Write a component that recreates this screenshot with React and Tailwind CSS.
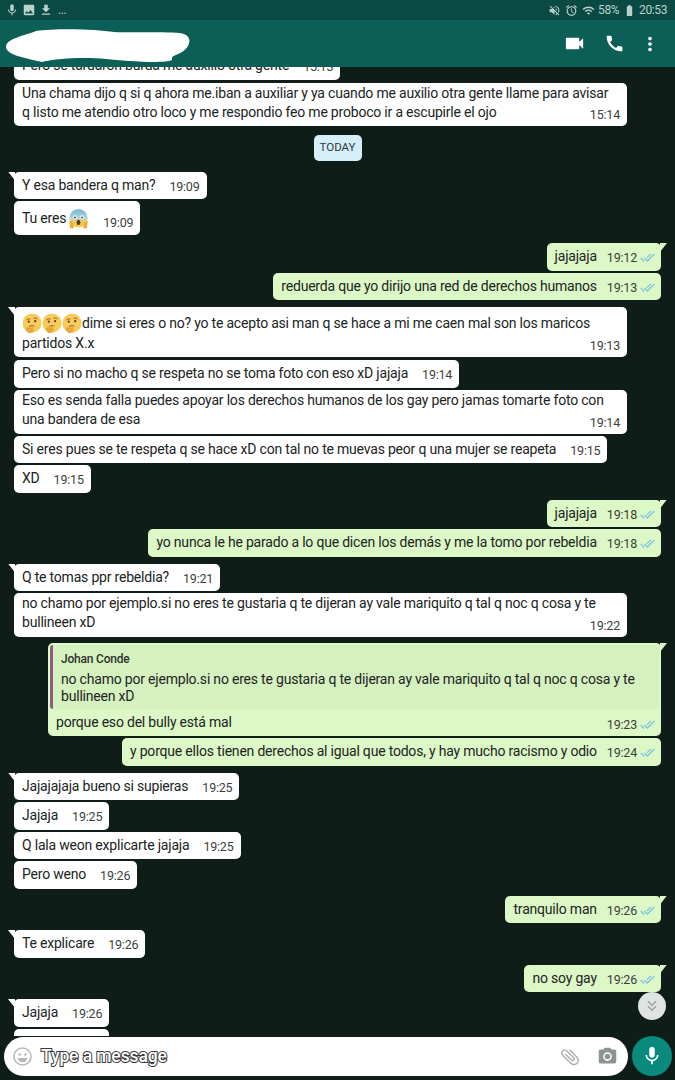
import React from 'react'
import {
  MdVideocam, MdCall, MdMoreVert, MdAttachFile, MdCameraAlt, MdMic, MdDoneAll,
  MdKeyboardDoubleArrowDown, MdVolumeOff, MdAccessAlarm, MdWifi, MdBatteryFull, MdImage, MdFileDownload,
} from 'react-icons/md'

const FearEmoji = () => (
  <svg viewBox="0 0 24 24" className="w-[21px] h-[21px] inline-block mx-[2px] align-[-5px]">
    <defs>
      <linearGradient id="fear" x1="0" y1="0" x2="0" y2="1">
        <stop offset="0" stopColor="#6bb5e8" />
        <stop offset="0.55" stopColor="#bcd8c8" />
        <stop offset="0.75" stopColor="#f7c843" />
      </linearGradient>
    </defs>
    <circle cx="12" cy="11.5" r="10.5" fill="url(#fear)" />
    <ellipse cx="8" cy="10.5" rx="2" ry="2.2" fill="#fff" />
    <ellipse cx="16" cy="10.5" rx="2" ry="2.2" fill="#fff" />
    <circle cx="8" cy="10.8" r="1" fill="#333" />
    <circle cx="16" cy="10.8" r="1" fill="#333" />
    <ellipse cx="12" cy="16.5" rx="2.2" ry="3" fill="#5b3a1e" />
    <path d="M1.5 15c2-1 3.5 1 4.500 4l1 4H2.500z" fill="#f2a93b" />
    <path d="M22.5 15c-2-1-3.500 1-4.500 4l-1 4h4.500z" fill="#f2a93b" />
  </svg>
)

const ThinkEmoji = () => (
  <svg viewBox="1 1 22 22" className="w-[20px] h-[20px] shrink-0">
    <circle cx="12" cy="12" r="10.5" fill="#f8cc5a" />
    <path d="M6 8.500c1-1.200 2.600-1.400 4-.8M14 6.800c1.500-.8 3.200-.4 4 .8" stroke="#8a5a22" strokeWidth="1.1" fill="none" strokeLinecap="round" />
    <circle cx="8.500" cy="10.500" r="1.200" fill="#5b3a1e" />
    <circle cx="15.500" cy="10" r="1.200" fill="#5b3a1e" />
    <path d="M9.500 15.500c1.600-.8 3.400-.8 5 -.2" stroke="#8a5a22" strokeWidth="1.1" fill="none" strokeLinecap="round" />
    <path d="M5 17.500c2-1 4-1 6-.3l2-3c.6-.6 1.300 0 1 .7l-1 2.600c1 .6 1.200 2.200.5 3.500-1 1.800-3.500 2.300-5.500 1.600-1.600-.6-3-2.200-3-5.100z" fill="#e8a63a" />
  </svg>
)

const Ticks = () => <MdDoneAll size={15} className="text-[#7fc4e0] ml-[3px] mb-[1px] shrink-0" />

const Time = ({ value, out }) => (
  <span className="flex items-center text-[12.5px] tracking-[-0.2px] leading-[16px] text-[#3a3f3c] whitespace-nowrap">
    {value}
    {out && <Ticks />}
  </span>
)

const Tail = ({ out }) =>
  out ? (
    <span className="absolute top-0 right-[-6px] w-[7px] h-[9px] bg-[#dcf8c6] [clip-path:polygon(0_0,100%_0,0_100%)]" />
  ) : (
    <span className="absolute top-0 left-[-6px] w-[7px] h-[9px] bg-white [clip-path:polygon(0_0,100%_0,100%_100%)]" />
  )

// one line bubble, text and time next to each other
const Line = ({ text, time, out, tail, className }) => (
  <div className={`relative flex items-center h-[27.5px] shrink-0 pl-[8px] rounded-[5px] w-fit text-[14px] tracking-[-0.2px] text-[#202422] whitespace-nowrap ${out ? 'pr-[6px] bg-[#dcf8c6] self-end mr-[14px]' : 'pr-[7px] bg-white ml-[14px]'} ${className}`}>
    {tail && <Tail out={out} />}
    <span>{text}</span>
    <span className={`mt-[3px] ${out ? 'ml-[10px]' : 'ml-[14px]'}`}><Time value={time} out={out} /></span>
  </div>
)

// two line bubble, time sits bottom right
const Block = ({ children, time, tail, className }) => (
  <div className={`relative w-[613px] shrink-0 ml-[14px] pl-[8px] pr-[7px] rounded-[5px] bg-white text-[14px] tracking-[-0.2px] text-[#202422] whitespace-nowrap ${className}`}>
    {tail && <Tail />}
    {children}
    <span className="absolute right-[7px] bottom-[3px]"><Time value={time} /></span>
  </div>
)

const App = () => {
  return (
    <div className="w-[675px] h-[1080px] flex flex-col overflow-hidden bg-[#0f1d18] font-['Roboto',sans-serif] relative">

      {/* status bar */}
      <div className="h-[20px] shrink-0 bg-[#0a4a42] flex items-center justify-between pl-[5px] pr-[8px] text-[#b9d2cc] text-[12px] tracking-[-0.4px]">
        <div className="flex items-center gap-[3px]">
          <MdMic size={14} />
          <MdImage size={14} />
          <MdFileDownload size={14} />
          <span className="leading-none ml-[2px]">...</span>
        </div>
        <div className="flex items-center gap-[3px]">
          <MdVolumeOff size={13} />
          <MdAccessAlarm size={13} className="ml-[1px]" />
          <MdWifi size={13} className="ml-[1px]" />
          <span>58%</span>
          <MdBatteryFull size={13} className="ml-[1px]" />
          <span>20:53</span>
        </div>
      </div>

      {/* header */}
      <div className="h-[47px] shrink-0 bg-[#0b5f56] flex items-center justify-between pl-[6px] pr-[14px] relative z-10">
        <svg viewBox="0 0 184 36" className="w-[184px] h-[36px] mt-[5px]">
          <path d="M0 18C2 10 18 8 30 3 50 0 90 1 108 4 125 5 170 3 178 6 186 9 185 18 176 24 168 28 165 28 166 32 158 36 120 33 100 31 80 29 52 30 36 34 20 30 -1 27 0 18z" fill="#fff" />
        </svg>
        <div className="flex items-center">
          <MdVideocam size={23} className="text-white" />
          <MdCall size={21} className="text-white ml-[18px]" />
          <MdMoreVert size={22} className="text-white ml-[14px]" />
        </div>
      </div>

      {/* messages */}
      <div className="flex-1 min-h-0 overflow-hidden flex flex-col">
        <Line text="Pero se tardaron burda me auxilio otra gente" time="15:13" className="mt-[-15px]" />

        <Block time="15:14" className="mt-[3px] h-[43px] pt-[1px] leading-[19px]">
          Una chama dijo q si q ahora me.iban a auxiliar y ya cuando me auxilio otra gente llame para avisar<br />
          q listo me atendio otro loco y me respondio feo me proboco ir a escupirle el ojo
        </Block>

        <div className="self-center mt-[9px] h-[26px] w-[48px] shrink-0 rounded-[5px] bg-[#d5eef7] flex items-center justify-center text-[11.5px] text-[#2c3a40]">TODAY</div>

        <Line tail text="Y esa bandera q man?" time="19:09" className="mt-[11px]" />
        <div className="relative flex items-center h-[34px] w-fit ml-[14px] mt-[2px] pl-[8px] pr-[7px] rounded-[5px] bg-white text-[14px] tracking-[-0.2px] text-[#202422] shrink-0">
          <span>Tu eres</span>
          <FearEmoji />
          <span className="ml-[12px] mt-[9px]"><Time value="19:09" /></span>
        </div>

        <Line out tail text="jajajaja" time="19:12" className="mt-[8px]" />
        <Line out text="reduerda que yo dirijo una red de derechos humanos" time="19:13" className="mt-[2px]" />

        <Block tail time="19:13" className="mt-[7px] h-[50px] pt-[6px] leading-[20px]">
          <div className="flex items-center">
            <ThinkEmoji /><ThinkEmoji /><ThinkEmoji />
            <span>dime si eres o no? yo te acepto asi man q se hace a mi me caen mal son los maricos</span>
          </div>
          partidos X.x
        </Block>
        <Line text="Pero si no macho q se respeta no se toma foto con eso xD jajaja" time="19:14" className="mt-[3px]" />
        <Block time="19:14" className="mt-[2px] h-[44px] pt-[1px] leading-[19px]">
          Eso es senda falla puedes apoyar los derechos humanos de los gay pero jamas tomarte foto con<br />
          una bandera de esa
        </Block>
        <Line text="Si eres pues se te respeta q se hace xD con tal no te muevas peor q una mujer se reapeta" time="19:15" className="mt-[2px]" />
        <Line text="XD" time="19:15" className="mt-[2px]" />

        <Line out tail text="jajajaja" time="19:18" className="mt-[7px]" />
        <Line out text="yo nunca le he parado a lo que dicen los demás y me la tomo por rebeldia" time="19:18" className="mt-[2px]" />

        <Line tail text="Q te tomas ppr rebeldia?" time="19:21" className="mt-[7px]" />
        <Block time="19:22" className="mt-[2px] h-[44px] pt-[1px] leading-[19px]">
          no chamo por ejemplo.si no eres te gustaria q te dijeran ay vale mariquito q tal q noc q cosa y te<br />
          bullineen xD
        </Block>

        {/* reply bubble */}
        <div className="relative self-end mr-[14px] mt-[6px] w-[613px] h-[93px] shrink-0 rounded-[5px] bg-[#dcf8c6] p-[2px] text-[14px] tracking-[-0.2px] text-[#202422]">
          <Tail out />
          <div className="h-[64px] rounded-[3px] bg-[#d6f1c0] border-l-[3px] border-[#8d5a80] pl-[8px] pt-[6px] leading-[17px]">
            <div className="text-[12px] font-medium text-[#2b332c]">Johan Conde</div>
            <div className="mt-[3px]">
              no chamo por ejemplo.si no eres te gustaria q te dijeran ay vale mariquito q tal q noc q cosa y te<br />
              bullineen xD
            </div>
          </div>
          <div className="flex items-center justify-between pl-[6px] pr-[4px] h-[26px]">
            <span>porque eso del bully está mal</span>
            <span className="mt-[5px]"><Time value="19:23" out /></span>
          </div>
        </div>
        <Line out text="y porque ellos tienen derechos al igual que todos, y hay mucho racismo y odio" time="19:24" className="mt-[2px]" />

        <Line tail text="Jajajajaja bueno si supieras" time="19:25" className="mt-[7px]" />
        <Line text="Jajaja" time="19:25" className="mt-[2px]" />
        <Line text="Q lala weon explicarte jajaja" time="19:25" className="mt-[2px]" />
        <Line text="Pero weno" time="19:26" className="mt-[2px]" />

        <Line out tail text="tranquilo man" time="19:26" className="mt-[7px]" />
        <Line tail text="Te explicare" time="19:26" className="mt-[7px]" />
        <Line out tail text="no soy gay" time="19:26" className="mt-[7px]" />
        <Line tail text="Jajaja" time="19:26" className="mt-[7px]" />
        <div className="h-[27.5px] w-[95px] shrink-0 ml-[14px] mt-[2px] rounded-[5px] bg-white" />
      </div>

      {/* scroll down button */}
      <div className="absolute left-[638px] top-[992px] w-[28px] h-[28px] rounded-full bg-[#dfe3e1] flex items-center justify-center">
        <MdKeyboardDoubleArrowDown size={18} className="text-[#9aa3a0]" />
      </div>

      {/* input row */}
      <div className="h-[44px] shrink-0 flex items-start pl-[4px] pr-[3px]">
        <div className="w-[624px] h-[39px] mt-[1px] rounded-full bg-white flex items-center pl-[9px] pr-[10px]">
          <svg viewBox="0 0 20 20" className="w-[19px] h-[19px] shrink-0">
            <circle cx="10" cy="10" r="9" fill="none" stroke="#b4b9b7" strokeWidth="1.6" />
            <circle cx="7" cy="8" r="1.3" fill="#b4b9b7" />
            <circle cx="13" cy="8" r="1.3" fill="#b4b9b7" />
            <path d="M5 11.5h10c-.5 3-2.500 4.500-5 4.500s-4.500-1.500-5-4.500z" fill="#b4b9b7" />
          </svg>
          <span className="ml-[9px] text-[17.5px] font-medium tracking-[-0.1px] text-white [-webkit-text-stroke:2px_#3a3a3a] [paint-order:stroke_fill]">Type a message</span>
          <MdAttachFile size={22} className="ml-auto text-[#a9aeac] rotate-[-45deg]" />
          <MdCameraAlt size={21} className="ml-[16px] text-[#8d9391]" />
        </div>
        <div className="ml-[4px] w-[40px] h-[40px] rounded-full bg-[#098a7d] flex items-center justify-center">
          <MdMic size={22} className="text-white" />
        </div>
      </div>
    </div>
  )
}

export default App
